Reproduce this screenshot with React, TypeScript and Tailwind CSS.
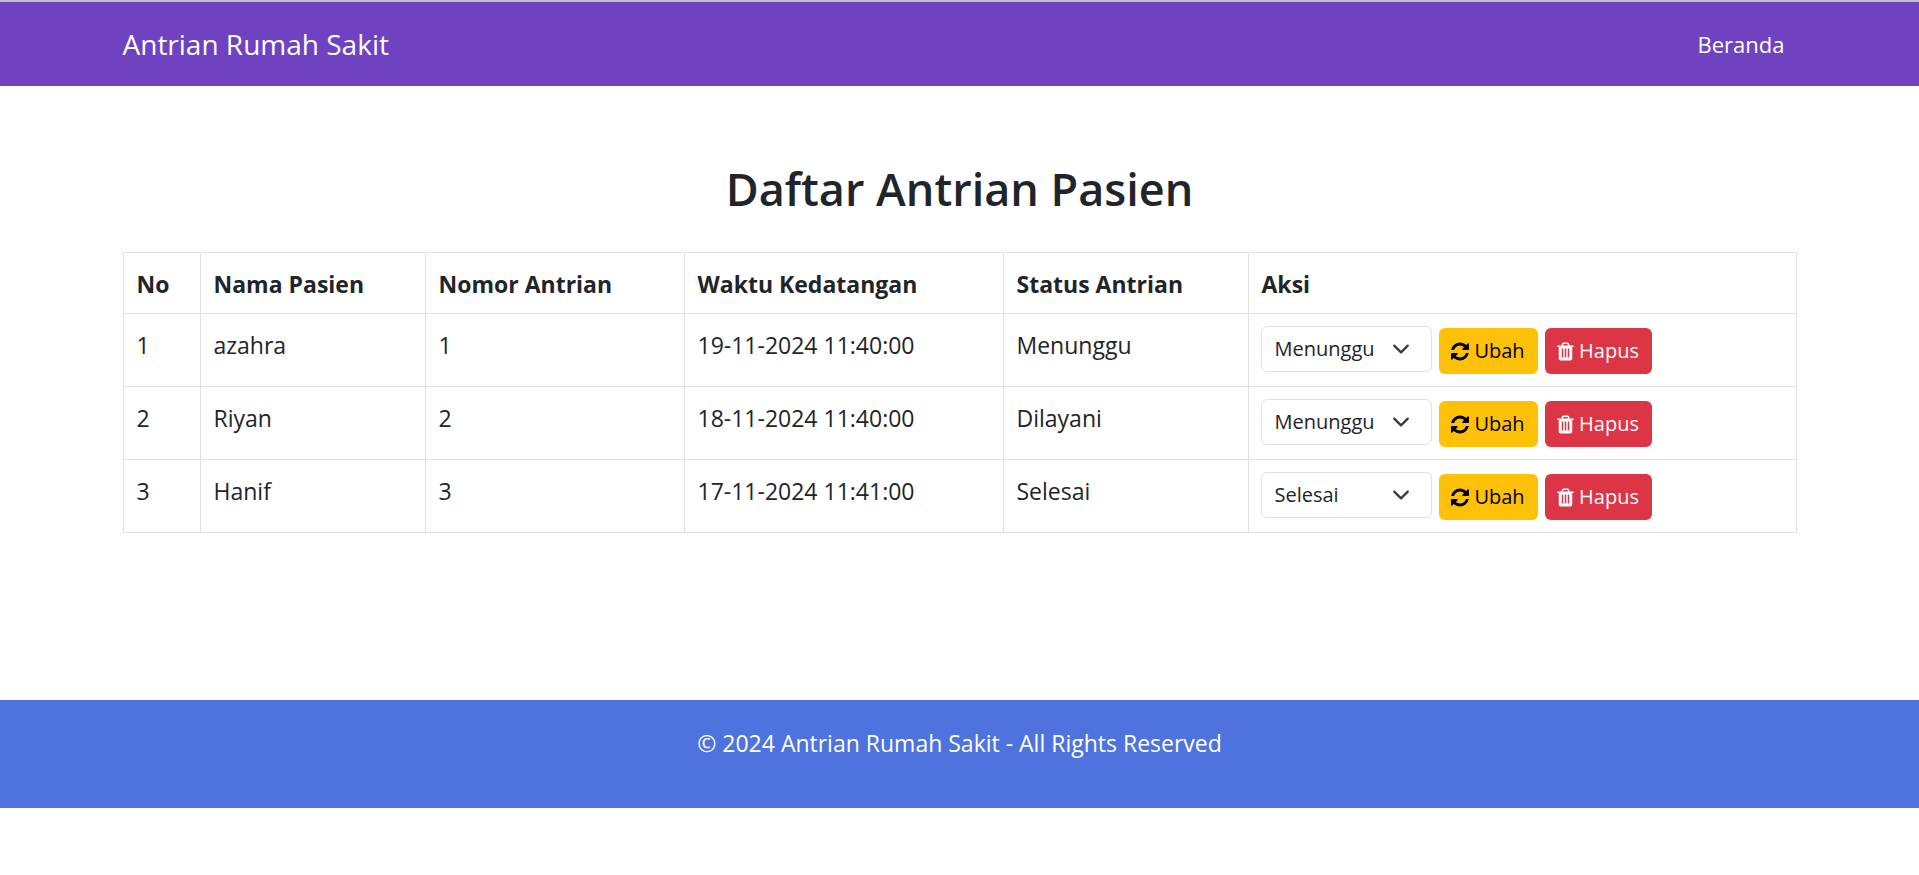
import React, { useState } from "react";

type Patient = { no: number; name: string; queue: number; arrival: string; status: string; choice: string };

const patients: Patient[] = [
  { no: 1, name: "azahra", queue: 1, arrival: "19-11-2024 11:40:00", status: "Menunggu", choice: "Menunggu" },
  { no: 2, name: "Riyan", queue: 2, arrival: "18-11-2024 11:40:00", status: "Dilayani", choice: "Menunggu" },
  { no: 3, name: "Hanif", queue: 3, arrival: "17-11-2024 11:41:00", status: "Selesai", choice: "Selesai" },
];

const statuses = ["Menunggu", "Dilayani", "Selesai"];

const cell = "border border-[#dee2e6] px-[13px] pt-[13px] pb-[11px] align-top";

function RefreshIcon() {
  return (
    <svg className="h-[21px] w-[18px]" viewBox="128 0 1536 1792" fill="currentColor" aria-hidden="true">
      <path d="M1639 1056q0 5-1 7-64 268-268 434.5t-478 166.5q-146 0-282.5-55t-243.5-157l-129 129q-19 19-45 19t-45-19-19-45v-448q0-26 19-45t45-19h448q26 0 45 19t19 45-19 45l-137 137q71 66 161 102t187 36q134 0 250-65t186-179q11-17 53-117 8-23 30-23h192q13 0 22.5 9.5t9.5 22.5zm25-800v448q0 26-19 45t-45 19h-448q-26 0-45-19t-19-45 19-45l138-138q-148-137-349-137-134 0-250 65t-186 179q-11 17-53 117-8 23-30 23h-199q-13 0-22.5-9.5t-9.5-22.5v-7q65-268 270-434.5t480-166.5q146 0 284 55.5t245 156.5l130-129q19-19 45-19t45 19 19 45z" />
    </svg>
  );
}

function TrashIcon() {
  return (
    <svg className="h-[21px] w-[17px]" viewBox="192 0 1408 1792" fill="currentColor" aria-hidden="true">
      <path d="M704 1376v-704q0-14-9-23t-23-9h-64q-14 0-23 9t-9 23v704q0 14 9 23t23 9h64q14 0 23-9t9-23zm256 0v-704q0-14-9-23t-23-9h-64q-14 0-23 9t-9 23v704q0 14 9 23t23 9h64q14 0 23-9t9-23zm256 0v-704q0-14-9-23t-23-9h-64q-14 0-23 9t-9 23v704q0 14 9 23t23 9h64q14 0 23-9t9-23zm-544-992h448l-48-117q-7-9-17-11h-317q-10 2-17 11zm928 32v64q0 14-9 23t-23 9h-96v948q0 83-47 143.5t-113 60.5h-832q-66 0-113-58.5t-47-141.5v-952h-96q-14 0-23-9t-9-23v-64q0-14 9-23t23-9h309l70-167q15-37 54-63t79-26h320q40 0 79 26t54 63l70 167h309q14 0 23 9t9 23z" />
    </svg>
  );
}

function StatusSelect({ patient }: { patient: Patient }) {
  const [value, setValue] = useState(patient.choice);
  return (
    <div className="grid w-[171px] items-center">
      <select
        aria-label={`Status ${patient.name}`}
        value={value}
        onChange={(e) => setValue(e.target.value)}
        className="col-start-1 row-start-1 h-[46px] appearance-none rounded-md border border-[#dee2e6] bg-white pl-[13px] pr-11 text-[20px] text-[#212529]"
      >
        {statuses.map((s) => (
          <option key={s}>{s}</option>
        ))}
      </select>
      <svg
        className="pointer-events-none col-start-1 row-start-1 mr-[22px] size-[18px] justify-self-end"
        viewBox="0 0 16 16"
        fill="none"
        stroke="#343a40"
        strokeWidth="2"
        strokeLinecap="round"
        strokeLinejoin="round"
        aria-hidden="true"
      >
        <path d="m2 5 6 6 6-6" />
      </svg>
    </div>
  );
}

export default function App() {
  return (
    <div className="font-['Open_Sans','Noto_Sans',sans-serif] text-[23px] leading-9 text-[#212529]">
      <header className="border-t-2 border-[#c0c0c8] bg-[#6f42c1] text-white">
        <nav className="mx-auto flex h-[84px] max-w-[1710px] items-center justify-between px-[18px]">
          <a href="#" className="text-[28px] leading-[42px]">Antrian Rumah Sakit</a>
          <a href="#" className="px-3 text-[22px]">Beranda</a>
        </nav>
      </header>

      <main className="mx-auto max-w-[1710px] px-[18px] pt-[68px] pb-[167px]">
        <h1 className="mb-7 text-center text-[45px] leading-[70px] font-semibold">Daftar Antrian Pasien</h1>
        <table className="w-full table-fixed border-collapse text-left">
          <colgroup>
            <col className="w-[77px]" />
            <col className="w-[225px]" />
            <col className="w-[259px]" />
            <col className="w-[319px]" />
            <col className="w-[245px]" />
            <col />
          </colgroup>
          <thead>
            <tr>
              {["No", "Nama Pasien", "Nomor Antrian", "Waktu Kedatangan", "Status Antrian", "Aksi"].map((h) => (
                <th key={h} scope="col" className={cell}>{h}</th>
              ))}
            </tr>
          </thead>
          <tbody>
            {patients.map((p) => (
              <tr key={p.no}>
                <td className={cell}>{p.no}</td>
                <td className={cell}>{p.name}</td>
                <td className={cell}>{p.queue}</td>
                <td className={cell}>{p.arrival}</td>
                <td className={cell}>{p.status}</td>
                <td className="border border-[#dee2e6] p-3 align-top">
                  <form className="flex items-start gap-[7px]" onSubmit={(e) => e.preventDefault()}>
                    <StatusSelect patient={p} />
                    <button type="submit" className="mt-0.5 flex h-[46px] w-[99px] items-center justify-center gap-[5px] rounded-md bg-[#ffc107] text-[20px] text-black">
                      <RefreshIcon />
                      Ubah
                    </button>
                    <button type="button" className="mt-0.5 flex h-[46px] w-[107px] items-center justify-center gap-[5px] rounded-md bg-[#dc3545] text-[20px] text-white">
                      <TrashIcon />
                      Hapus
                    </button>
                  </form>
                </td>
              </tr>
            ))}
          </tbody>
        </table>
      </main>

      <footer className="bg-[#4e73df] pt-[25px] pb-[47px] text-center text-white">
        <p>© 2024 Antrian Rumah Sakit - All Rights Reserved</p>
      </footer>
    </div>
  );
}
